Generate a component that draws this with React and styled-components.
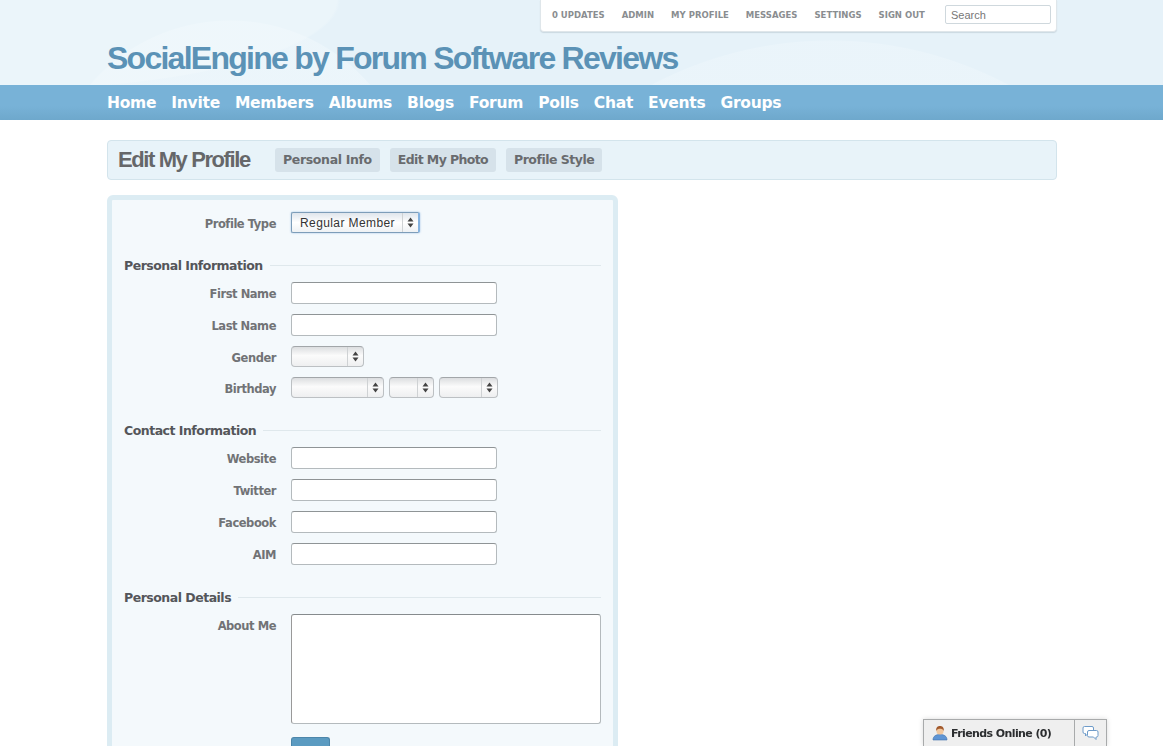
import React from 'react'
import styled, { createGlobalStyle } from 'styled-components'

const Global = createGlobalStyle`
  html, body {
    margin: 0;
    height: 100%;
    overflow: hidden;
    background: #fff;
    font-family: 'DejaVu Sans', Verdana, sans-serif;
  }
`

const Header = styled.div`
  height: 85px;
  background:
    radial-gradient(circle 382px at 830px 422px, rgba(244, 250, 253, 0.3) 381px, transparent 382px),
    radial-gradient(circle 185px at 230px 205px, rgba(244, 250, 253, 0.4) 184px, transparent 185px),
    radial-gradient(ellipse 340px 90px at 0px 0px, #ebf5fa 99%, transparent 100%),
    #e6f2f9;
`

const Wrap = styled.div`
  width: 950px;
  margin-left: 107px;
`

const TopBar = styled.div`
  width: 517px;
  height: 32px;
  margin-left: 433px;
  box-sizing: border-box;
  display: flex;
  align-items: center;
  padding: 0 5px 1px 11px;
  background: #fff;
  border: 1px solid #dfe6ea;
  border-top: none;
  border-radius: 0 0 4px 4px;
  box-shadow: 0 1px 1px rgba(120, 140, 150, 0.25);
`

const TopLink = styled.a`
  font-size: 8.5px;
  font-weight: 700;
  color: #8a8d90;
  letter-spacing: 0;
  margin-right: ${props => props.gap}px;
  white-space: nowrap;
`

const Search = styled.input`
  width: 106px;
  height: 19px;
  box-sizing: border-box;
  margin-left: auto;
  margin-bottom: 1px;
  padding: 0 5px;
  border: 1px solid #cfd8dd;
  border-radius: 2px;
  font-family: 'Liberation Sans', Arial, sans-serif;
  font-size: 11px;
  outline: 0;
  &::placeholder {
    color: #777;
    opacity: 1;
  }
`

const Title = styled.div`
  margin-top: 7px;
  font-family: 'Liberation Sans', Arial, sans-serif;
  font-size: 32px;
  line-height: 38px;
  font-weight: 700;
  letter-spacing: -1.74px;
  color: #5b92b6;
  white-space: nowrap;
`

const Nav = styled.div`
  height: 35px;
  background: linear-gradient(#78b2d7, #78b2d7 60%, #6ea8cc);
`

const NavLinks = styled.div`
  display: flex;
  gap: 15px;
  height: 35px;
  align-items: center;
`

const NavLink = styled.a`
  font-size: 15.5px;
  font-weight: 700;
  letter-spacing: -0.25px;
  color: #fff;
  white-space: nowrap;
`

const SubNav = styled.div`
  height: 40px;
  margin-top: 20px;
  box-sizing: border-box;
  display: flex;
  align-items: center;
  padding: 0 10px;
  background: #e8f3f9;
  border: 1px solid #d3e4ec;
  border-radius: 4px;
`

const PageTitle = styled.div`
  width: 157px;
  font-family: 'Liberation Sans', Arial, sans-serif;
  font-size: 22px;
  font-weight: 700;
  letter-spacing: -1.4px;
  color: #666769;
  white-space: nowrap;
`

const Tab = styled.a`
  height: 24px;
  line-height: 23px;
  padding: 0 8px;
  margin-right: 10px;
  background: #d6e2ea;
  border-radius: 3px;
  font-size: 12.5px;
  font-weight: 700;
  letter-spacing: ${props => props.spacing}px;
  color: #696b6e;
  white-space: nowrap;
`

const FormBox = styled.div`
  width: 511px;
  height: 600px;
  margin-top: 15px;
  box-sizing: border-box;
  padding: 12px 12px 0;
  background: #f4f9fc;
  border: 5px solid #dcecf3;
  border-radius: 6px;
`

const Row = styled.div`
  display: flex;
  align-items: ${props => (props.top ? 'flex-start' : 'center')};
  height: ${props => props.h || 32}px;
`

const Label = styled.div`
  width: 152px;
  flex-shrink: 0;
  margin-right: 15px;
  text-align: right;
  font-size: 11.5px;
  font-weight: 700;
  letter-spacing: -0.45px;
  color: #717376;
  white-space: nowrap;
  padding-top: ${props => props.pad || 2}px;
`

const Section = styled.div`
  display: flex;
  align-items: center;
  gap: 7px;
  margin-top: ${props => props.mt}px;
  margin-bottom: ${props => props.mb || 0}px;
  height: 20px;
  font-size: 12.5px;
  font-weight: 700;
  letter-spacing: -0.5px;
  color: #54565a;
  white-space: nowrap;
  &::after {
    content: '';
    flex: 1;
    border-top: 1px solid #dfe8ec;
  }
`

const TextInput = styled.input`
  width: 206px;
  height: 22px;
  box-sizing: border-box;
  background: #fff;
  border: 1px solid #b4babd;
  border-top-color: #8f9496;
  border-radius: 3px;
  outline: 0;
`

const TextArea = styled.textarea`
  display: block;
  width: 310px;
  height: 110px;
  box-sizing: border-box;
  background: #fff;
  border: 1px solid #b4babd;
  border-top-color: #868b8d;
  border-left-color: #999;
  border-radius: 3px;
  outline: 0;
  resize: none;
`

const Selects = styled.div`
  display: flex;
  gap: 5px;
  margin-top: -1px;
`

const SelectBox = styled.div`
  width: ${props => props.w}px;
  height: 21px;
  box-sizing: border-box;
  display: flex;
  align-items: center;
  background: linear-gradient(#dcdee0, #fbfbfb 45%, #eeeff0);
  border: 1px solid #bcc0c3;
  border-top-color: #a2a6a9;
  border-radius: 4px;
  font-family: 'Liberation Sans', Arial, sans-serif;
  font-size: 12px;
  color: #333;
`

const SelectText = styled.div`
  flex: 1;
  padding-left: 8px;
  white-space: nowrap;
`

const SelectArrows = styled.div`
  width: 15px;
  height: 100%;
  display: flex;
  align-items: center;
  justify-content: center;
  border-left: 1px solid #cfd2d4;
`

const FocusSelect = styled(SelectBox)`
  width: 129px;
  background: linear-gradient(#dfe5ec, #fff 50%, #eef1f4);
  border: 1px solid #7d9db9;
  border-right: 2px solid #84b2e0;
  border-radius: 2px;
  box-shadow: 0 0 2px rgba(110, 160, 220, 0.7);
  letter-spacing: 0.4px;
`

const SaveButton = styled.div`
  width: 39px;
  height: 24px;
  margin-left: 167px;
  margin-top: 13px;
  background: #5b9bc1;
  border: 1px solid #4c86aa;
  border-bottom: none;
  border-radius: 3px 3px 0 0;
  box-sizing: border-box;
`

const FriendsBar = styled.div`
  position: fixed;
  left: 923px;
  bottom: 0;
  width: 184px;
  height: 27px;
  box-sizing: border-box;
  display: flex;
  background: #efefef;
  border: 1px solid #a8aaab;
  border-bottom: none;
  box-shadow: 0 0 5px rgba(0, 0, 0, 0.15);
`

const FriendsLabel = styled.div`
  flex: 1;
  display: flex;
  align-items: center;
  gap: 3px;
  padding-left: 8px;
  font-size: 11px;
  font-weight: 700;
  letter-spacing: -0.6px;
  color: #2b2d2f;
  white-space: nowrap;
`

const ChatTab = styled.div`
  width: 31px;
  display: flex;
  align-items: center;
  justify-content: center;
  border-left: 1px solid #a8aaab;
`

const Arrows = () => (
  <svg width="7" height="11" viewBox="0 0 7 11">
    <path d="M3.5 0.5 L6.5 4.5 H0.5 Z M3.5 10.5 L6.5 6.5 H0.5 Z" fill="#444" />
  </svg>
)

const Select = ({ w, children }) => (
  <SelectBox w={w}>
    <SelectText>{children}</SelectText>
    <SelectArrows>
      <Arrows />
    </SelectArrows>
  </SelectBox>
)

const PersonIcon = () => (
  <svg width="16" height="16" viewBox="0 0 16 16">
    <path d="M1 15 C1 11 4 9.5 8 9.5 C12 9.5 15 11 15 15 Z" fill="#5f95d4" stroke="#3f6ea8" strokeWidth="0.6" />
    <circle cx="8" cy="6" r="3.6" fill="#f0c79e" />
    <path d="M4.2 6 C3.8 2 6 1 8 1 C10 1 12.2 2 11.8 6 C11 4 9.5 3.7 8 3.7 C6.5 3.7 5 4 4.2 6 Z" fill="#a2592c" />
  </svg>
)

const ChatIcon = () => (
  <svg width="17" height="16" viewBox="0 0 17 16" fill="#fff" stroke="#6e9bc9" strokeWidth="1">
    <path d="M2.5 1.5 H10 Q11.5 1.5 11.5 3 V7 Q11.5 8.5 10 8.5 H6 L3.5 11 V8.5 H2.5 Q1 8.5 1 7 V3 Q1 1.5 2.5 1.5 Z" />
    <path d="M7 5.5 H14.5 Q16 5.5 16 7 V10.5 Q16 12 14.5 12 H14 V14.5 L11.5 12 H7 Q5.5 12 5.5 10.5 V7 Q5.5 5.5 7 5.5 Z" />
  </svg>
)

const navItems = ['Home', 'Invite', 'Members', 'Albums', 'Blogs', 'Forum', 'Polls', 'Chat', 'Events', 'Groups']
const topLinks = [
  ['0 UPDATES', 17],
  ['ADMIN', 17],
  ['MY PROFILE', 17],
  ['MESSAGES', 17],
  ['SETTINGS', 17],
  ['SIGN OUT', 0]
]

const InputRow = ({ label }) => (
  <Row>
    <Label>{label}</Label>
    <TextInput />
  </Row>
)

export default function App() {
  return (
    <>
      <Global />
      <Header>
        <Wrap>
          <TopBar>
            {topLinks.map(([name, gap]) => (
              <TopLink key={name} gap={gap}>
                {name}
              </TopLink>
            ))}
            <Search placeholder="Search" />
          </TopBar>
          <Title>SocialEngine by Forum Software Reviews</Title>
        </Wrap>
      </Header>
      <Nav>
        <Wrap>
          <NavLinks>
            {navItems.map(item => (
              <NavLink key={item}>{item}</NavLink>
            ))}
          </NavLinks>
        </Wrap>
      </Nav>
      <Wrap>
        <SubNav>
          <PageTitle>Edit My Profile</PageTitle>
          <Tab spacing={-0.35}>Personal Info</Tab>
          <Tab spacing={-0.62}>Edit My Photo</Tab>
          <Tab spacing={-0.5}>Profile Style</Tab>
        </SubNav>
        <FormBox>
          <Row h={21}>
            <Label>Profile Type</Label>
            <FocusSelect>
              <SelectText>Regular Member</SelectText>
              <SelectArrows>
                <Arrows />
              </SelectArrows>
            </FocusSelect>
          </Row>
          <Section mt={22} mb={2}>Personal Information</Section>
          <InputRow label="First Name" />
          <InputRow label="Last Name" />
          <Row>
            <Label>Gender</Label>
            <Selects>
              <Select w={73} />
            </Selects>
          </Row>
          <Row h={30}>
            <Label>Birthday</Label>
            <Selects>
              <Select w={93} />
              <Select w={45} />
              <Select w={59} />
            </Selects>
          </Row>
          <Section mt={17} mb={2}>Contact Information</Section>
          <InputRow label="Website" />
          <InputRow label="Twitter" />
          <InputRow label="Facebook" />
          <InputRow label="AIM" />
          <Section mt={17} mb={7}>Personal Details</Section>
          <Row top h={110}>
            <Label pad={5}>About Me</Label>
            <TextArea />
          </Row>
          <SaveButton />
        </FormBox>
      </Wrap>
      <FriendsBar>
        <FriendsLabel>
          <PersonIcon />
          Friends Online (0)
        </FriendsLabel>
        <ChatTab>
          <ChatIcon />
        </ChatTab>
      </FriendsBar>
    </>
  )
}
